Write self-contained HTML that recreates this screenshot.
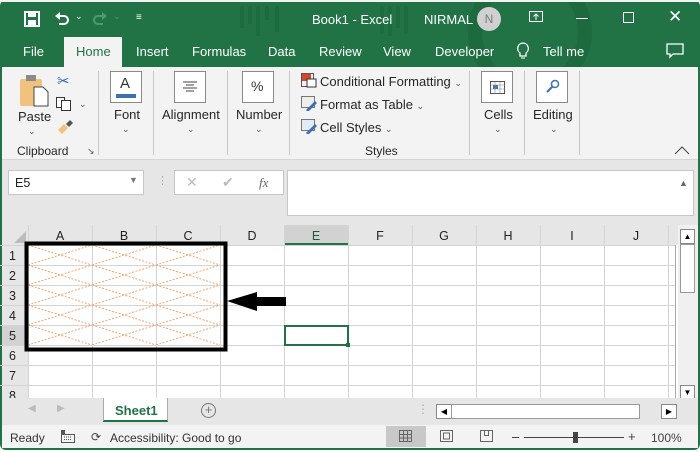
<!DOCTYPE html>
<html><head><meta charset="utf-8"><style>
*{margin:0;padding:0;box-sizing:border-box}
body{width:700px;height:452px;overflow:hidden;background:#fff;font-family:"Liberation Sans",sans-serif;position:relative}
.a{position:absolute}
.t{position:absolute;white-space:nowrap}
.tab{color:#fff;font-size:13px;top:44px}
.rb{font-size:13px;color:#262626}
.ib{position:absolute;width:32px;height:32px;border:1px solid #8a8a8a;background:#fff;top:71px}
.sep{position:absolute;width:1px;background:#c8c8c8;top:71px;height:84px}
.ch{font-size:12.5px;color:#222;top:229px;text-align:center;width:64px}
.rh{font-size:12.5px;color:#222;left:9px}
.car{font-size:9px;color:#555}
</style></head><body>
<!-- frame -->
<div class="a" style="left:0;top:0;width:700px;height:450px;background:#217346;border-radius:6px"></div>
<div class="a" style="left:0;top:0;width:700px;height:2px;background:#f3f3f3"></div>
<!-- title decorations -->
<svg class="a" style="left:230px;top:2px" width="470" height="65"><g fill="#1d6a3f">
<rect x="10" y="4" width="4" height="22"/><rect x="18" y="4" width="4" height="18"/><rect x="26" y="4" width="4" height="30"/><rect x="35" y="4" width="4" height="14"/><rect x="45" y="4" width="4" height="26"/>
<rect x="150" y="4" width="4" height="28"/><rect x="158" y="4" width="4" height="30"/><rect x="166" y="4" width="4" height="22"/><rect x="174" y="4" width="4" height="28"/>
</g><circle cx="300" cy="30" r="55" fill="none" stroke="#1d6a3f" stroke-width="14"/></svg>
<!-- QAT -->
<svg class="a" style="left:24px;top:11px" width="16" height="16"><rect x="1" y="1" width="14" height="14" fill="none" stroke="#fff" stroke-width="2"/><rect x="4" y="1" width="8" height="5" fill="#fff"/><rect x="4" y="9" width="8" height="6" fill="#fff"/></svg>
<svg class="a" style="left:54px;top:11px" width="16" height="14"><path d="M3 5h7a4 4 0 0 1 0 8H5" fill="none" stroke="#fff" stroke-width="2"/><path d="M1 5l5-4v8z" fill="#fff"/></svg>
<div class="t" style="left:75px;top:11px;color:#fff;font-size:9px">⌄</div>
<svg class="a" style="left:92px;top:11px" width="16" height="14"><path d="M13 5H6a4 4 0 0 0 0 8h5" fill="none" stroke="#4d9a6d" stroke-width="2"/><path d="M15 5l-5-4v8z" fill="#4d9a6d"/></svg>
<div class="t" style="left:113px;top:11px;color:#4d9a6d;font-size:9px">⌄</div>
<div class="t" style="left:136px;top:12px;color:#fff;font-size:10px">≡</div>
<div class="t" style="left:312px;top:12px;color:#fff;font-size:13px">Book1  -  Excel</div>
<div class="t" style="left:424px;top:12px;color:#fff;font-size:13px">NIRMAL</div>
<div class="a" style="left:477px;top:7px;width:24px;height:24px;border-radius:50%;background:#d0d0d0;color:#7a7a7a;font-size:12px;text-align:center;line-height:24px">N</div>
<svg class="a" style="left:529px;top:11px" width="14" height="12"><rect x="0.5" y="0.5" width="13" height="10" fill="none" stroke="#fff"/><path d="M7 9V3M4.5 5.5L7 3l2.5 2.5" fill="none" stroke="#fff"/></svg>
<div class="a" style="left:576px;top:18px;width:12px;height:1px;background:#fff"></div>
<div class="a" style="left:623px;top:12px;width:11px;height:11px;border:1px solid #fff"></div>
<div class="t" style="left:668px;top:7px;color:#fff;font-size:17px">✕</div>
<!-- tabs -->
<div class="t tab" style="left:23px">File</div>
<div class="a" style="left:64px;top:37px;width:58px;height:31px;background:#f3f3f3"></div>
<div class="t tab" style="left:76px;color:#217346">Home</div>
<div class="t tab" style="left:136px">Insert</div>
<div class="t tab" style="left:192px">Formulas</div>
<div class="t tab" style="left:268px">Data</div>
<div class="t tab" style="left:319px">Review</div>
<div class="t tab" style="left:383px">View</div>
<div class="t tab" style="left:435px">Developer</div>
<svg class="a" style="left:516px;top:42px" width="14" height="19"><path d="M7 1a5.5 5.5 0 0 0-3 10v3h6v-3a5.5 5.5 0 0 0-3-10z" fill="none" stroke="#fff" stroke-width="1.3"/><path d="M5 16h4" stroke="#fff"/></svg>
<div class="t tab" style="left:543px">Tell me</div>
<svg class="a" style="left:666px;top:43px" width="18" height="16"><path d="M1 1h16v10H7l-3 3v-3H1z" fill="none" stroke="#fff" stroke-width="1.3"/></svg>
<!-- ribbon -->
<div class="a" style="left:2px;top:67px;width:696px;height:93px;background:#f3f3f3"></div>
<div class="a" style="left:2px;top:159px;width:696px;height:1px;background:#d6d6d6"></div>
<!-- clipboard -->
<div class="a" style="left:20px;top:79px;width:22px;height:27px;background:#f1c27d;border-radius:2px"></div>
<div class="a" style="left:26px;top:75px;width:10px;height:6px;background:#8b8b8b"></div>
<svg class="a" style="left:33px;top:86px" width="16" height="21"><path d="M1 1h9l5 5v14H1z" fill="#fff" stroke="#444"/></svg>
<div class="t rb" style="left:18px;top:109px">Paste</div>
<div class="t car" style="left:28px;top:126px">⌄</div>
<div class="t" style="left:57px;top:72px;color:#2a6ab3;font-size:15px">✂</div>
<svg class="a" style="left:56px;top:97px" width="16" height="14"><rect x="0.5" y="0.5" width="8" height="10" fill="#fff" stroke="#333"/><rect x="5.5" y="3.5" width="9" height="10" fill="#fff" stroke="#333"/></svg>
<div class="t car" style="left:79px;top:99px">⌄</div>
<svg class="a" style="left:56px;top:120px" width="18" height="14"><path d="M2 10l6-6 4 4-6 6z" fill="#f1c27d"/><path d="M10 4l4-4 3 3-4 4z" fill="#555"/></svg>
<div class="t rb" style="left:17px;top:144px;font-size:12px">Clipboard</div>
<div class="t" style="left:87px;top:146px;font-size:9px;color:#555">↘</div>
<div class="sep" style="left:98px"></div>
<div class="ib" style="left:110px"><div class="t" style="left:9px;top:3px;font-size:15px;color:#333">A</div><div class="a" style="left:5px;top:22px;width:20px;height:4px;background:#3d6fb4"></div></div>
<div class="t rb" style="left:114px;top:107px">Font</div>
<div class="t car" style="left:122px;top:124px">⌄</div>
<div class="sep" style="left:153px"></div>
<div class="ib" style="left:174px"><svg class="a" style="left:8px;top:9px" width="14" height="12"><path d="M0 1h14M3 4h8M0 7h14M3 10h8" stroke="#444"/></svg></div>
<div class="t rb" style="left:162px;top:107px">Alignment</div>
<div class="t car" style="left:187px;top:124px">⌄</div>
<div class="sep" style="left:227px"></div>
<div class="ib" style="left:242px"><div class="t" style="left:8px;top:6px;font-size:14px;color:#333">%</div></div>
<div class="t rb" style="left:236px;top:107px">Number</div>
<div class="t car" style="left:255px;top:124px">⌄</div>
<div class="sep" style="left:289px"></div>
<svg class="a" style="left:301px;top:73px" width="16" height="15"><rect x="0" y="0" width="10" height="8" fill="#d04a2a"/><rect x="0.5" y="0.5" width="12" height="13" fill="none" stroke="#555"/><rect x="6" y="6" width="9" height="8" fill="#fff" stroke="#333"/></svg>
<div class="t rb" style="left:320px;top:74px">Conditional Formatting <span class="car">⌄</span></div>
<svg class="a" style="left:301px;top:96px" width="16" height="15"><rect x="0.5" y="0.5" width="13" height="11" fill="#eee" stroke="#777"/><path d="M5 14l9-9 2 2-9 9z" fill="#3d6fb4"/></svg>
<div class="t rb" style="left:320px;top:97px">Format as Table <span class="car">⌄</span></div>
<svg class="a" style="left:301px;top:119px" width="16" height="15"><rect x="0.5" y="0.5" width="13" height="11" fill="#e2ecf7" stroke="#777"/><path d="M5 14l9-9 2 2-9 9z" fill="#3d6fb4"/></svg>
<div class="t rb" style="left:320px;top:120px">Cell Styles <span class="car">⌄</span></div>
<div class="t rb" style="left:365px;top:144px;font-size:12px">Styles</div>
<div class="sep" style="left:469px"></div>
<div class="ib" style="left:481px"><svg class="a" style="left:8px;top:7px" width="16" height="16"><rect x="0.5" y="2.5" width="14" height="12" fill="none" stroke="#555"/><rect x="3" y="6" width="5" height="4" fill="#3d6fb4"/><path d="M0 6h15M0 10h15M5 3v12M10 3v12" stroke="#888" stroke-width=".6"/></svg></div>
<div class="t rb" style="left:484px;top:107px">Cells</div>
<div class="t car" style="left:494px;top:124px">⌄</div>
<div class="sep" style="left:524px"></div>
<div class="ib" style="left:536px"><svg class="a" style="left:9px;top:7px" width="14" height="14"><circle cx="9" cy="5" r="3.5" fill="none" stroke="#3d6fb4" stroke-width="1.5"/><path d="M6.5 7.5L1 13" stroke="#3d6fb4" stroke-width="2"/></svg></div>
<div class="t rb" style="left:533px;top:107px">Editing</div>
<div class="t car" style="left:550px;top:124px">⌄</div>
<div class="sep" style="left:579px"></div>
<svg class="a" style="left:674px;top:146px" width="16" height="9"><path d="M1 8l7-7 7 7" fill="none" stroke="#444"/></svg>
<!-- formula area -->
<div class="a" style="left:2px;top:160px;width:696px;height:85px;background:#e6e6e6"></div>
<div class="a" style="left:8px;top:170px;width:136px;height:25px;background:#fff;border:1px solid #c6c6c6"></div>
<div class="t" style="left:15px;top:176px;font-size:12.5px;color:#222">E5</div>
<div class="t" style="left:129px;top:175px;font-size:9px;color:#777">▼</div>
<div class="t" style="left:157px;top:174px;font-size:11px;color:#aaa">⋮</div>
<div class="a" style="left:174px;top:170px;width:110px;height:25px;background:#fff;border:1px solid #c6c6c6"></div>
<div class="t" style="left:186px;top:174px;font-size:14px;color:#bbb">✕</div>
<div class="t" style="left:222px;top:174px;font-size:14px;color:#bbb">✔</div>
<div class="t" style="left:259px;top:175px;font-size:13px;color:#666;font-family:'Liberation Serif',serif;font-style:italic">fx</div>
<div class="a" style="left:287px;top:170px;width:407px;height:46px;background:#fff;border:1px solid #c6c6c6"></div>
<div class="t" style="left:679px;top:178px;font-size:9px;color:#666">▲</div>
<!-- grid -->
<div class="a" style="left:2px;top:225px;width:676px;height:173px;background:#fff"></div>
<div class="a" style="left:2px;top:225px;width:676px;height:20px;background:#e6e6e6"></div>
<div class="a" style="left:2px;top:225px;width:26px;height:173px;background:#e6e6e6"></div>
<div class="a" style="left:284px;top:225px;width:64px;height:20px;background:#d2d2d2;border-bottom:2px solid #217346"></div>
<div class="a" style="left:2px;top:325px;width:26px;height:20px;background:#d2d2d2"></div>
<svg class="a" style="left:0;top:225px" width="680" height="173">
<path d="M14 18L26 6V18Z" fill="#bdbdbd"/>
<g stroke="#d4d4d4" stroke-width="1">
<path d="M28.5 0V173M92.5 0V173M156.5 0V173M220.5 0V173M284.5 0V173M348.5 0V173M412.5 0V173M476.5 0V173M540.5 0V173M604.5 0V173M668.5 0V173"/>
<path d="M0 20.5H676M0 40.5H676M0 60.5H676M0 80.5H676M0 100.5H676M0 120.5H676M0 140.5H676M0 160.5H676"/>
</g>
<path d="M675.5 20V173" stroke="#aaa"/>
</svg>
<div class="t ch" style="left:28px">A</div><div class="t ch" style="left:92px">B</div><div class="t ch" style="left:156px">C</div><div class="t ch" style="left:220px">D</div><div class="t ch" style="left:284px;color:#1e5c36">E</div><div class="t ch" style="left:348px">F</div><div class="t ch" style="left:412px">G</div><div class="t ch" style="left:476px">H</div><div class="t ch" style="left:540px">I</div><div class="t ch" style="left:604px">J</div>
<div class="t rh" style="top:249px">1</div><div class="t rh" style="top:269px">2</div><div class="t rh" style="top:289px">3</div><div class="t rh" style="top:309px">4</div><div class="t rh" style="top:329px">5</div><div class="t rh" style="top:349px">6</div><div class="t rh" style="top:369px">7</div><div class="t rh" style="top:389px">8</div>
<svg class="a" style="left:0;top:0" width="700" height="452">
<defs><pattern id="x" x="28" y="245" width="64" height="20" patternUnits="userSpaceOnUse"><path d="M0 0L64 20M0 20L64 0" stroke="#f3a56e" stroke-width="1" stroke-dasharray="2,1.5"/></pattern></defs>
<rect x="28" y="245" width="192" height="100" fill="url(#x)"/>
<rect x="26.5" y="243.5" width="199" height="106" fill="none" stroke="#000" stroke-width="4"/>
<path d="M227 301L257 292V297H286V306H257V311Z" fill="#000"/>
<rect x="285" y="326" width="63" height="19" fill="none" stroke="#217346" stroke-width="2"/>
<rect x="346" y="343" width="4" height="4" fill="#217346"/>
</svg>
<!-- vscroll -->
<div class="a" style="left:678px;top:225px;width:20px;height:173px;background:#f0f0f0"></div>
<div class="a" style="left:680px;top:229px;width:15px;height:15px;background:#fff;border:1px solid #888;font-size:8px;text-align:center;line-height:13px">▲</div>
<div class="a" style="left:680px;top:244px;width:15px;height:49px;background:#fff;border:1px solid #999"></div>
<div class="a" style="left:680px;top:385px;width:15px;height:15px;background:#fff;border:1px solid #888;font-size:8px;text-align:center;line-height:13px">▼</div>
<!-- sheet bar -->
<div class="a" style="left:2px;top:398px;width:696px;height:27px;background:#e6e6e6"></div>
<div class="t" style="left:28px;top:403px;font-size:10px;color:#bbb">◀</div>
<div class="t" style="left:57px;top:403px;font-size:10px;color:#bbb">▶</div>
<div class="a" style="left:103px;top:398px;width:65px;height:24px;background:#fff;border-bottom:2px solid #217346;border-left:1px solid #aaa;border-right:1px solid #aaa"></div>
<div class="t" style="left:115px;top:403px;font-size:13px;font-weight:bold;color:#217346">Sheet1</div>
<div class="a" style="left:201px;top:403px;width:15px;height:15px;border:1.5px solid #777;border-radius:50%;color:#777;font-size:13px;line-height:12px;text-align:center">+</div>
<div class="t" style="left:417px;top:402px;font-size:12px;color:#aaa">⋮</div>
<div class="a" style="left:436px;top:404px;width:16px;height:15px;background:#fff;border:1px solid #888;font-size:8px;line-height:13px;text-align:center">◀</div>
<div class="a" style="left:451px;top:404px;width:189px;height:15px;background:#fff;border:1px solid #999"></div>
<div class="a" style="left:661px;top:404px;width:16px;height:15px;background:#fff;border:1px solid #888;font-size:8px;line-height:13px;text-align:center">▶</div>
<!-- status -->
<div class="a" style="left:2px;top:425px;width:696px;height:23px;background:#f3f3f3"></div>
<div class="t" style="left:10px;top:431px;font-size:12px;color:#333">Ready</div>
<svg class="a" style="left:61px;top:430px" width="14" height="13"><rect x="0" y="0" width="4" height="4" fill="#555"/><rect x="0.5" y="4.5" width="13" height="8" fill="none" stroke="#555"/><path d="M3 7h8M3 9.5h8" stroke="#555" stroke-dasharray="1,1"/></svg>
<div class="t" style="left:91px;top:430px;font-size:12px;color:#444">⟳</div>
<div class="t" style="left:110px;top:431px;font-size:12px;color:#333">Accessibility: Good to go</div>
<div class="a" style="left:386px;top:426px;width:40px;height:21px;background:#c8c8c8"></div>
<svg class="a" style="left:399px;top:430px" width="13" height="12"><rect x="0.5" y="0.5" width="12" height="11" fill="none" stroke="#666"/><path d="M4.5 0v12M8.5 0v12M0 4.5h13M0 8h13" stroke="#666"/></svg>
<svg class="a" style="left:440px;top:430px" width="13" height="12"><rect x="0.5" y="0.5" width="12" height="11" fill="none" stroke="#666"/><rect x="3.5" y="3" width="6" height="6" fill="none" stroke="#666"/></svg>
<svg class="a" style="left:480px;top:430px" width="13" height="12"><path d="M0.5 0.5h12v11H0.5zM4.5 0.5v5h4v-5" fill="none" stroke="#666"/></svg>
<div class="a" style="left:512px;top:437px;width:7px;height:1px;background:#444"></div>
<div class="a" style="left:524px;top:437px;width:100px;height:1px;background:#444"></div>
<div class="a" style="left:573px;top:432px;width:5px;height:11px;background:#444"></div>
<div class="t" style="left:628px;top:429px;font-size:13px;color:#444">+</div>
<div class="t" style="left:651px;top:431px;font-size:12px;color:#444">100%</div>
</body></html>
